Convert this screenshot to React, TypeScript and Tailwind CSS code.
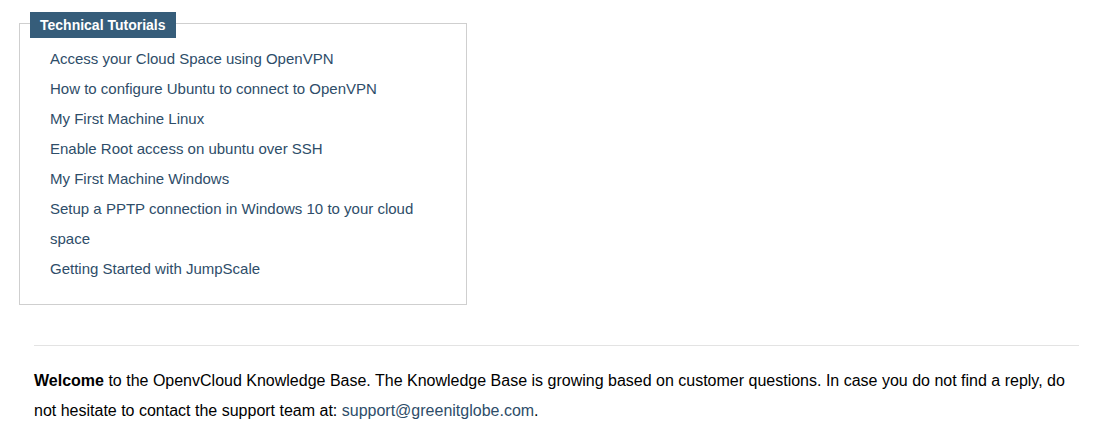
import React from "react";

const links = [
  "Access your Cloud Space using OpenVPN",
  "How to configure Ubuntu to connect to OpenVPN",
  "My First Machine Linux",
  "Enable Root access on ubuntu over SSH",
  "My First Machine Windows",
  "Setup a PPTP connection in Windows 10 to your cloud space",
  "Getting Started with JumpScale",
];

export default function App() {
  return (
    <div className="min-h-[445px] bg-white pt-[12px] font-['Liberation_Sans',Arial,sans-serif] text-[15px] text-[#222]">
      <fieldset className="ml-[19px] w-[448px] border border-[#cfcfcf] px-[10px] pb-[20px]">
        <legend className="h-[22px] bg-[#365d7a] px-[10px] text-[14px] font-bold leading-[26px] text-white shadow-[0_4px_0_#365d7a]">
          Technical Tutorials
        </legend>
        <ul className="mt-[10px] pl-[20px] pr-[30px]">
          {links.map((l) => (
            <li key={l} className="leading-[30px]">
              <a href="#" className="text-[#2e4d69]">
                {l}
              </a>
            </li>
          ))}
        </ul>
      </fieldset>
      <div className="ml-[34px] w-[1045px]">
        <hr className="mt-[40px] border-t border-[#e3e3e3]" />
        <p className="mt-[20px] text-[16px] leading-[30px] text-black">
          <b>Welcome</b> to the OpenvCloud Knowledge Base. The Knowledge Base is growing based on customer questions. In case you do not find a reply, do not hesitate to contact the support team at:{" "}
          <a href="#" className="text-[#2e4d69]">
            support@greenitglobe.com
          </a>
          .
        </p>
      </div>
    </div>
  );
}
